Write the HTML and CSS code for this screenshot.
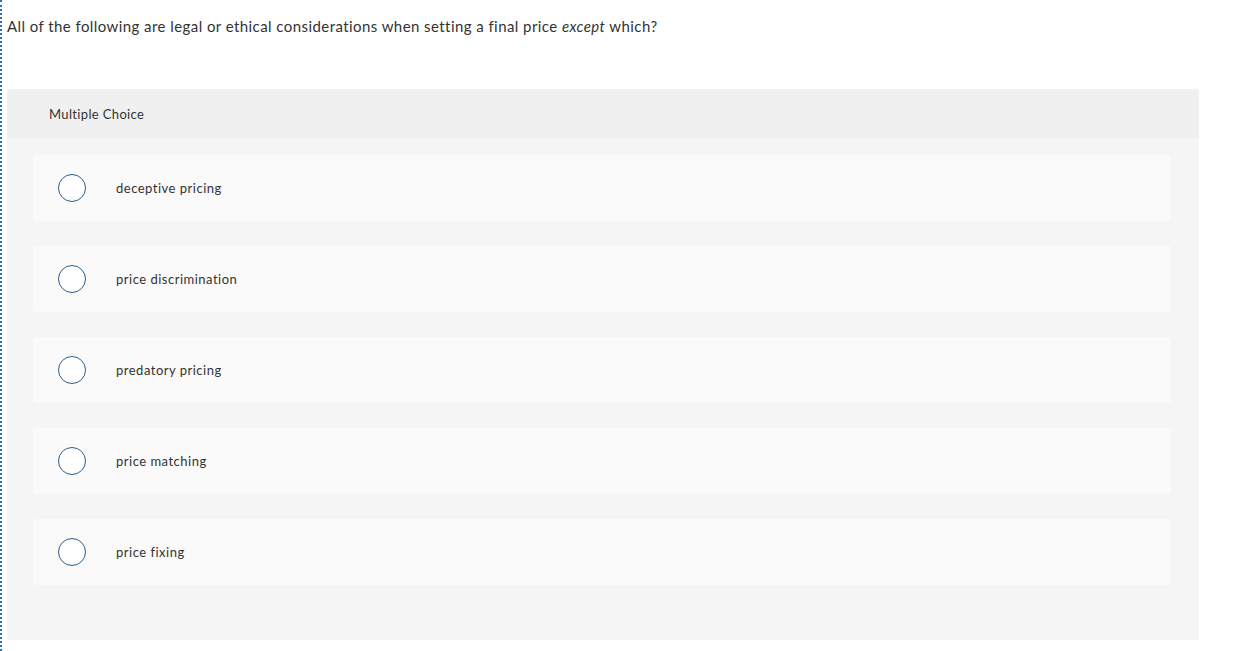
FILE: index.html
```html
<!DOCTYPE html>
<html lang="en">
<head>
<meta charset="utf-8">
<title>Multiple Choice</title>
<link rel="stylesheet" href="styles.css">
</head>
<body>
<div class="page">
  <p class="question">All of the following are legal or ethical considerations when setting a final price <em>except</em> which?</p>
  <div class="card">
    <div class="card-head">Multiple Choice</div>
    <div class="card-body">
      <label class="option"><span class="radio"></span><span class="label">deceptive pricing</span></label>
      <label class="option"><span class="radio"></span><span class="label">price discrimination</span></label>
      <label class="option"><span class="radio"></span><span class="label">predatory pricing</span></label>
      <label class="option"><span class="radio"></span><span class="label">price matching</span></label>
      <label class="option"><span class="radio"></span><span class="label">price fixing</span></label>
    </div>
  </div>
</div>
</body>
</html>
```

FILE: styles.css
```css
html, body {
  margin: 0;
  padding: 0;
  background: #fff;
}
body {
  font-family: Lato, "Open Sans", "Liberation Sans", sans-serif;
  font-variant-ligatures: none;
  color: #333;
}
.page {
  border-left: 2px dotted #2f6fbd;
  min-height: 651px;
  box-sizing: border-box;
  padding: 17px 37px 11px 5px;
}
.question {
  margin: 0 0 54px 0;
  font-size: 15px;
  line-height: 18px;
  letter-spacing: 0.43px;
  color: #333;
}
.question em {
  font-style: italic;
}
.card {
  background: #f5f5f5;
  border-radius: 3px;
  overflow: hidden;
}
.card-head {
  background: #f0f0f0;
  height: 50px;
  display: flex;
  align-items: center;
  padding-left: 42px;
  font-size: 13px;
  letter-spacing: 0.35px;
  color: #333;
}
.card-body {
  display: flex;
  flex-direction: column;
  gap: 25px;
  padding: 16px 28px 55px 26px;
}
.option {
  display: flex;
  align-items: center;
  height: 66px;
  background: #fafafa;
  border-radius: 3px;
  padding-left: 25px;
  font-size: 13px;
  letter-spacing: 0.5px;
  color: #333;
}
.radio {
  width: 28px;
  height: 28px;
  box-sizing: border-box;
  border: 1.5px solid #2b5c8c;
  border-radius: 50%;
  background: #fff;
  flex: none;
  margin-right: 30px;
}
```
